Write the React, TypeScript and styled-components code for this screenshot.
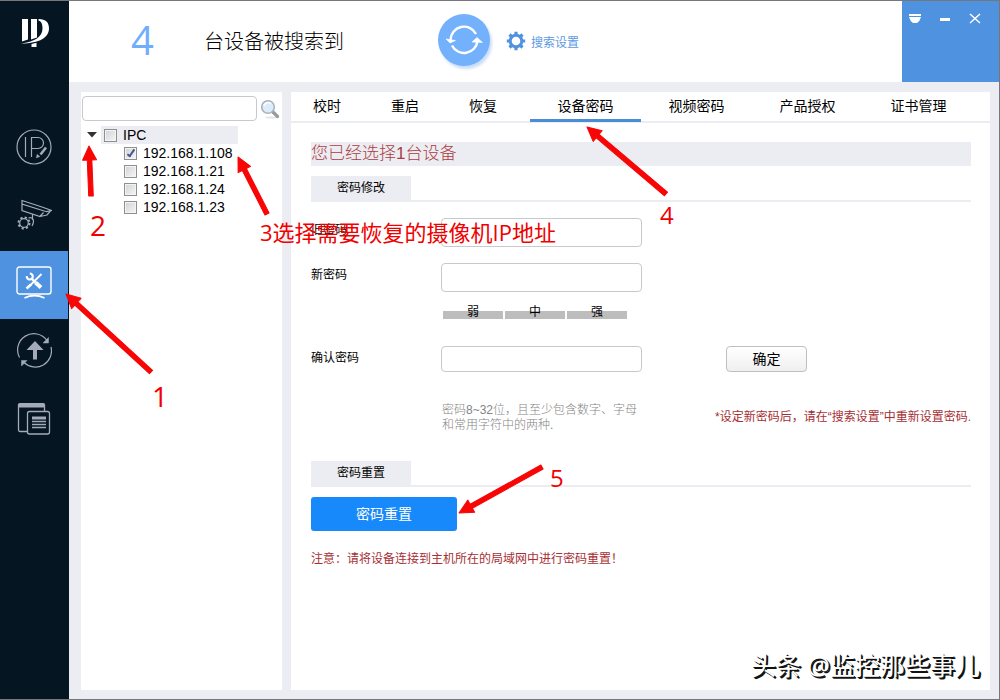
import React from 'react';
import styled, { createGlobalStyle } from 'styled-components';

const Global = createGlobalStyle`
  *, *::before, *::after { box-sizing: border-box; }
  body { margin: 0; background: #fff; }
  button, input { font: inherit; color: inherit; }
  body, button, input { font-family: "Liberation Sans", "Noto Sans CJK SC", sans-serif; }
`;

const Window = styled.div`
  position: relative;
  display: flex;
  min-height: 100vh;
  border: solid #77777b;
  border-width: 1px 1px 1px 0;
  background: #ecedf2;
  color: #000;
  font-size: 12px;
  overflow: hidden;
`;

const Sidebar = styled.aside`
  flex: none;
  width: 69px;
  padding-right: 1px;
  background: #051522;
`;

const Logo = styled.div`
  height: 114px;
  padding: 18px 0 0 20px;
`;

const NavButton = styled.button<{ $active?: boolean }>`
  display: flex;
  align-items: center;
  justify-content: center;
  width: 100%;
  height: 68px;
  padding: 0 0 4px;
  border: 0;
  background: ${p => (p.$active ? '#4f92e0' : 'transparent')};
  color: ${p => (p.$active ? '#fff' : '#a3abb8')};
`;

const Body = styled.div`
  flex: 1;
  min-width: 0;
  display: flex;
  flex-direction: column;
`;

const Header = styled.header`
  display: flex;
  align-items: center;
  height: 81px;
  background: #fff;
`;

const HeaderInfo = styled.div`
  display: flex;
  align-items: center;
  padding-bottom: 3px;
`;

const Count = styled.span`
  width: 135px;
  padding-left: 62px;
  font: 40px/70px "Open Sans", sans-serif;
  color: #71aefa;
`;

const Title = styled.h1`
  margin: 0;
  padding-top: 4px;
  width: 234px;
  font-size: 20px;
  font-weight: 300;
  line-height: 24px;
`;

const RefreshButton = styled.button`
  width: 52px;
  height: 52px;
  padding: 0;
  border: 0;
  border-radius: 50%;
  background: #73b1fd;
  box-shadow: 2px 3px 3px #c9dcf7;
`;

const SettingsButton = styled.button`
  display: flex;
  align-items: center;
  gap: 5px;
  margin-left: 16px;
  padding: 2px 0 0;
  border: 0;
  background: none;
  color: #5c9ae2;
`;

const WindowControls = styled.div`
  display: flex;
  align-items: flex-start;
  gap: 18px;
  align-self: stretch;
  width: 97px;
  margin-left: auto;
  padding: 11px 7px;
  background: #4f92e0;
`;

const ControlButton = styled.button`
  display: block;
  width: 12px;
  height: 12px;
  padding: 0;
  border: 0;
  background: none;
`;

const Content = styled.div`
  flex: 1;
  display: flex;
  gap: 9px;
  padding: 10px 9px 9px 12px;
`;

const TreePanel = styled.section`
  flex: none;
  width: 201px;
  padding: 4px 1px;
  background: #fff;
`;

const SearchRow = styled.div`
  display: flex;
  align-items: center;
  gap: 3px;
`;

const TextField = styled.input<{ $width: number; $height: number }>`
  width: ${p => p.$width}px;
  height: ${p => p.$height}px;
  padding: 0 6px;
  border: 1px solid #c8c9cd;
  border-radius: 4px;
  background: #fff;
  outline: none;
`;

const IconButton = styled.button`
  display: block;
  width: 20px;
  height: 22px;
  padding: 0;
  border: 0;
  background: none;
`;

const Tree = styled.ul`
  margin: 5px 0 0;
  padding: 0;
  list-style: none;
  font-size: 14px;
  line-height: 18px;
`;

const TreeRoot = styled.div`
  display: flex;
  align-items: center;
`;

const Twisty = styled.button`
  display: flex;
  justify-content: center;
  width: 19px;
  padding: 0;
  border: 0;
  background: none;
`;

const TreeLabel = styled.label<{ $child?: boolean }>`
  display: flex;
  align-items: center;
  gap: 6px;
  width: 137px;
  height: 18px;
  margin-left: ${p => (p.$child ? 39 : 0)}px;
  padding-left: 3px;
  background: ${p => (p.$child ? 'none' : '#ecedf2')};
`;

const Checkbox = styled.input.attrs({ type: 'checkbox' })`
  appearance: none;
  position: relative;
  flex: none;
  width: 13px;
  height: 13px;
  margin: 0;
  border: 1px solid #8e8f8f;
  background: linear-gradient(135deg, #cfd2d6, #f6f6f6);
  box-shadow: inset 0 0 0 1px #f4f4f4;

  &:checked::after {
    content: "";
    position: absolute;
    left: 4px;
    top: 0;
    width: 4px;
    height: 9px;
    border: solid #46568f;
    border-width: 0 2px 2px 0;
    transform: rotate(35deg);
  }
`;

const Main = styled.main`
  flex: 1;
  min-width: 0;
  background: #fff;
`;

const Tabs = styled.nav`
  display: flex;
  gap: 11px;
  height: 31px;
  border-bottom: 2px solid #ecedf2;
`;

const TabGroup = styled.div<{ $gap: number }>`
  display: flex;
  gap: ${p => p.$gap}px;
`;

const Tab = styled.button<{ $width: number; $active?: boolean }>`
  width: ${p => p.$width}px;
  height: 30px;
  padding: 2px 0 0;
  border: 0;
  border-bottom: 3px solid ${p => (p.$active ? '#4a8bda' : 'transparent')};
  background: none;
  font-size: 14px;
  line-height: 25px;
`;

const Form = styled.form`
  padding: 19px 19px 19px 20px;
`;

const Banner = styled.p`
  height: 24px;
  margin: 0 0 10px;
  background: #ecedf2;
  color: #ae3b42;
  font-size: 17px;
  font-weight: 300;
  line-height: 23px;
`;

const SectionHeader = styled.div`
  border-bottom: 2px solid #ecedf2;
`;

const SectionTitle = styled.h2`
  width: 100px;
  height: 24px;
  margin: 0;
  background: #ecedf2;
  font-size: 12px;
  font-weight: 400;
  line-height: 25px;
  text-align: center;
`;

const Fields = styled.div`
  display: grid;
  grid-template-columns: 130px 201px 1fr;
  padding: 16px 0 28px;
`;

const FieldLabel = styled.label`
  line-height: 24px;
`;

const FieldRow = styled.div<{ $space: number }>`
  grid-column: 1 / -1;
  display: grid;
  grid-template-columns: subgrid;
  align-items: start;
  margin-bottom: ${p => p.$space}px;
`;

const Strength = styled.div`
  grid-column: 2;
  display: flex;
  gap: 2px;
  padding-left: 2px;
`;

const StrengthBar = styled.span`
  width: 60px;
  height: 16px;
  background: linear-gradient(#fff 8px, #bdbdbd 8px);
  line-height: 18px;
  text-align: center;
`;

const ConfirmButton = styled.button`
  width: 81px;
  height: 26px;
  margin-left: 84px;
  padding: 0;
  border: 1px solid #bfbfc2;
  border-radius: 4px;
  background: linear-gradient(#fff, #efeff1);
  font-size: 14px;
  line-height: 24px;
`;

const Hint = styled.p`
  grid-column: 2;
  margin: 0;
  padding-left: 1px;
  color: #858585;
  font-weight: 300;
  line-height: 15px;
  white-space: nowrap;
`;

const Warning = styled.p`
  margin: 0;
  padding-top: 5px;
  color: #a52f35;
  line-height: 18px;
  text-align: right;
  white-space: nowrap;
`;

const Notice = styled.p`
  margin: 0;
  color: #a52f35;
  line-height: 18px;
`;

const ResetButton = styled.button`
  display: block;
  width: 146px;
  height: 34px;
  margin: 10px 0 19px;
  padding: 0;
  border: 0;
  border-radius: 3px;
  background: #1889fb;
  color: #fff;
  font-size: 14px;
  line-height: 34px;
`;

const Arrows = styled.svg`
  position: absolute;
  left: 0;
  top: -1px;
  pointer-events: none;
`;

const Note = styled.span<{ $x: number; $y: number; $size: number }>`
  position: absolute;
  left: ${p => p.$x}px;
  top: ${p => p.$y}px;
  color: #f00000;
  font-family: "Open Sans", "Noto Sans CJK SC", sans-serif;
  font-size: ${p => p.$size}px;
  line-height: 30px;
  white-space: nowrap;
  pointer-events: none;
`;

const Watermark = styled.span`
  position: absolute;
  right: 19px;
  bottom: 16px;
  color: #fff;
  font-family: "Open Sans", "Noto Sans CJK SC", sans-serif;
  font-size: 25px;
  line-height: 36px;
  text-shadow: 1px 1px 0 #111, 2px 2px 0 #111;
  pointer-events: none;
`;

const EditIpIcon = () => (
  <svg width="36" height="36" viewBox="0 0 36 36" fill="none" stroke="currentColor" strokeWidth="1.2">
    <circle cx="18" cy="18" r="17" />
    <path d="M9.500 8v20M15.500 28V8.500h6.500a5.500 5.500 0 0 1 0 11H16" />
    <path d="M30 18.500l-5.500 7" strokeWidth="2.600" />
    <path d="M20.500 28.800l.6-3.300 2.600 2z" fill="currentColor" strokeWidth=".6" />
  </svg>
);

const CameraIcon = () => (
  <svg width="36" height="32" viewBox="0 0 36 32" fill="none" stroke="currentColor" strokeWidth="1.200">
    <path d="M6 1.500l20 6.500 9.500 3.500-5 1.200L6 5zM6 5v6.500l18 6 3.500-4M24 17.500l7-1.500 3.500-4M16.500 15v6M12.500 19c2-1 5 0 5 3 0 2-.5 3.500-1.500 5" />
    <circle cx="8" cy="24" r="4.300" />
    <circle cx="8" cy="24" r="5.500" strokeWidth="2" strokeDasharray="2.160 2.160" />
  </svg>
);

const ToolsIcon = () => (
  <svg width="36" height="34" viewBox="0 0 36 34" fill="none" stroke="currentColor">
    <rect x="1" y="1" width="34" height="27" rx="2.500" strokeWidth="1.400" />
    <path d="M8.500 32c6-3 14-3 20 0" strokeWidth="1.800" />
    <path d="M25.500 8L14 19.500" strokeWidth="1.800" />
    <path d="M15 18.500L10.500 22.500" strokeWidth="2.600" />
    <path d="M10.800 10.200a3 3 0 1 0 3-2.700" strokeWidth="2.200" />
    <path d="M15.500 12.500l4 4" strokeWidth="2.400" />
    <path d="M19.500 16.500l5.500 5" strokeWidth="4" />
  </svg>
);

const UpgradeIcon = () => (
  <svg width="36" height="36" viewBox="0 0 36 36" fill="none" stroke="currentColor" strokeWidth="1.200">
    <path d="M3.500 24.500A16.200 16.200 0 0 1 31 7.500M35 14a16.200 16.200 0 0 1-27 15.500" />
    <path d="M32.500 4.500v5.500h-5.500zM5.500 33v-5.500h5.500z" fill="currentColor" strokeWidth=".5" />
    <path d="M19 8l8.500 9h-6.500v9.500h-4V17H10.500z" fill="currentColor" stroke="none" />
  </svg>
);

const DocsIcon = () => (
  <svg width="34" height="34" viewBox="0 0 34 34" fill="none" stroke="currentColor" strokeWidth="1.300">
    <path d="M10 29.500H3a1.500 1.500 0 0 1-1.500-1.500V2.500M27.500 2.500V9" />
    <path d="M1 5.500V2.500A1.500 1.500 0 0 1 2.500 1h24A1.500 1.500 0 0 1 28 2.500v3z" fill="currentColor" stroke="none" />
    <rect x="10.500" y="9.500" width="22" height="22.500" rx="2" />
    <path d="M15 14.500h14v3H15z" fill="currentColor" stroke="none" />
    <path d="M15 19.500h14M15 22.500h14M15 25.500h14" />
  </svg>
);

const navItems = [
  { name: '修改IP', icon: <EditIpIcon /> },
  { name: '设备配置', icon: <CameraIcon /> },
  { name: '系统设置', icon: <ToolsIcon />, active: true },
  { name: '设备升级', icon: <UpgradeIcon /> },
  { name: '模板', icon: <DocsIcon /> },
];

const devices = ['192.168.1.108', '192.168.1.21', '192.168.1.24', '192.168.1.23'];

const arrows = [
  { from: [151, 372], to: [66, 294] },
  { from: [91, 196], to: [89, 146] },
  { from: [267, 214], to: [238, 157] },
  { from: [666, 194], to: [587, 127] },
  { from: [542, 467], to: [459, 513] },
];

const Arrow = ({ from, to }: { from: number[]; to: number[] }) => {
  const dx = to[0] - from[0];
  const dy = to[1] - from[1];
  const len = Math.hypot(dx, dy);
  const angle = (Math.atan2(dy, dx) * 180) / Math.PI;
  return (
    <g transform={`translate(${from[0]} ${from[1]}) rotate(${angle})`} fill="#f80505">
      <path d={`M0-2.300H${len - 14}V-7L${len} 0L${len - 14} 7V2.300H0z`} stroke="#f80505" strokeLinejoin="round" />
    </g>
  );
};

export default function App() {
  return (
    <>
      <Global />
      <Window>
        <Sidebar>
          <Logo>
            <svg width="30" height="30" viewBox="0 0 30 30" fill="#fff">
              <path d="M2 0h6v20.500l-6 2zM11 0h6v18.500l-6 2z" />
              <path d="M18.500 0C26 0 29 3.500 29 9.500 29 18 20 24.500 1 24.500 14 23 22.500 18 22.500 9.500 22.500 5 21.500 2.500 18.500 1.500z" />
              <path d="M11.500 25l5-1.200V28h-5z" />
            </svg>
          </Logo>
          <nav>
            {navItems.map(n => (
              <NavButton key={n.name} $active={n.active} aria-label={n.name}>{n.icon}</NavButton>
            ))}
          </nav>
        </Sidebar>

        <Body>
          <Header>
            <HeaderInfo>
              <Count>4</Count>
              <Title>台设备被搜索到</Title>
              <RefreshButton aria-label="刷新">
                <svg width="52" height="52" viewBox="0 0 52 52" fill="none" stroke="#fff" strokeWidth="2.400">
                  <path d="M12.500 26A13.500 13.500 0 0 1 38 20M39.500 27A13.500 13.500 0 0 1 14 31.500" />
                  <path d="M8 25l9.500 1.500L12 29zM34 28l5-4.500 5.500 5z" fill="#fff" strokeWidth=".6" />
                </svg>
              </RefreshButton>
              <SettingsButton>
                <svg width="20" height="20" viewBox="0 0 20 20" fill="none" stroke="#4f92e0">
                  <circle cx="10" cy="10" r="5.800" strokeWidth="3" />
                  <path d="M10 .8v3M10 16.200v3M.8 10h3M16.200 10h3M3.500 3.500l2 2M14.500 14.500l2 2M3.500 16.500l2-2M14.500 5.500l2-2" strokeWidth="3.200" />
                </svg>
                搜索设置
              </SettingsButton>
            </HeaderInfo>
            <WindowControls>
              <ControlButton aria-label="菜单">
                <svg width="12" height="12" viewBox="0 0 12 12" fill="#fff">
                  <path d="M0 2h12v2H0zM0 5h12Q11 9 8 11H4Q1 9 0 5z" />
                </svg>
              </ControlButton>
              <ControlButton aria-label="最小化">
                <svg width="12" height="12" viewBox="0 0 12 12" fill="#fff"><path d="M1 6h10v3H1z" /></svg>
              </ControlButton>
              <ControlButton aria-label="关闭">
                <svg width="12" height="12" viewBox="0 0 12 12" stroke="#fff" strokeWidth="1.500">
                  <path d="M1 2l10 9M11 2L1 11" />
                </svg>
              </ControlButton>
            </WindowControls>
          </Header>

          <Content>
            <TreePanel>
              <SearchRow>
                <TextField $width={175} $height={25} aria-label="搜索" />
                <IconButton aria-label="搜索">
                  <svg width="20" height="22" viewBox="0 0 20 22">
                    <ellipse cx="11" cy="19.500" rx="6" ry="1" fill="#e4e4e6" />
                    <path d="M13 14l4.500 4.500" stroke="#999a9e" strokeWidth="3.200" strokeLinecap="round" />
                    <circle cx="8" cy="9" r="6.300" fill="#dcecf8" stroke="#a9b2bd" strokeWidth="1.600" />
                    <path d="M4 8a4.500 4.500 0 0 1 7-2.500" stroke="#fff" strokeWidth="1.500" fill="none" />
                  </svg>
                </IconButton>
              </SearchRow>
              <Tree>
                <li>
                  <TreeRoot>
                    <Twisty type="button" aria-label="展开">
                      <svg width="10" height="6" viewBox="0 0 10 6" fill="#333"><path d="M0 0h10L5 5.500z" /></svg>
                    </Twisty>
                    <TreeLabel><Checkbox />IPC</TreeLabel>
                  </TreeRoot>
                </li>
                {devices.map((ip, i) => (
                  <li key={ip}>
                    <TreeLabel $child><Checkbox defaultChecked={i === 0} />{ip}</TreeLabel>
                  </li>
                ))}
              </Tree>
            </TreePanel>

            <Main>
              <Tabs>
                <TabGroup $gap={6}>
                  {['校时', '重启', '恢复'].map(t => <Tab key={t} $width={72}>{t}</Tab>)}
                </TabGroup>
                <TabGroup $gap={0}>
                  {['设备密码', '视频密码', '产品授权', '证书管理'].map((t, i) => (
                    <Tab key={t} $width={111} $active={i === 0}>{t}</Tab>
                  ))}
                </TabGroup>
              </Tabs>

              <Form onSubmit={e => e.preventDefault()}>
                <Banner>您已经选择1台设备</Banner>
                <SectionHeader><SectionTitle>密码修改</SectionTitle></SectionHeader>
                <Fields>
                  <FieldRow $space={16}>
                    <FieldLabel htmlFor="old">旧密码</FieldLabel>
                    <TextField id="old" type="password" $width={201} $height={29} />
                  </FieldRow>
                  <FieldRow $space={11}>
                    <FieldLabel htmlFor="new">新密码</FieldLabel>
                    <TextField id="new" type="password" $width={201} $height={29} />
                  </FieldRow>
                  <FieldRow $space={27}>
                    <Strength>
                      <StrengthBar>弱</StrengthBar>
                      <StrengthBar>中</StrengthBar>
                      <StrengthBar>强</StrengthBar>
                    </Strength>
                  </FieldRow>
                  <FieldRow $space={31}>
                    <FieldLabel htmlFor="confirm">确认密码</FieldLabel>
                    <TextField id="confirm" type="password" $width={201} $height={26} />
                    <ConfirmButton>确定</ConfirmButton>
                  </FieldRow>
                  <FieldRow $space={0}>
                    <Hint>密码8~32位，且至少包含数字、字母<br />和常用字符中的两种.</Hint>
                    <Warning>*设定新密码后，请在“搜索设置”中重新设置密码.</Warning>
                  </FieldRow>
                </Fields>

                <SectionHeader><SectionTitle>密码重置</SectionTitle></SectionHeader>
                <ResetButton type="button">密码重置</ResetButton>
                <Notice>注意：请将设备连接到主机所在的局域网中进行密码重置！</Notice>
              </Form>
            </Main>
          </Content>
        </Body>

        <Arrows width="700" height="540" viewBox="0 0 700 540" aria-hidden="true">
          {arrows.map((a, i) => <Arrow key={i} {...a} />)}
        </Arrows>
        <Note $x={152} $y={380} $size={28}>1</Note>
        <Note $x={90} $y={209} $size={28}>2</Note>
        <Note $x={260} $y={216} $size={22}>3选择需要恢复的摄像机IP地址</Note>
        <Note $x={660} $y={199} $size={24}>4</Note>
        <Note $x={550} $y={462} $size={24}>5</Note>
        <Watermark>头条 @监控那些事儿</Watermark>
      </Window>
    </>
  );
}
